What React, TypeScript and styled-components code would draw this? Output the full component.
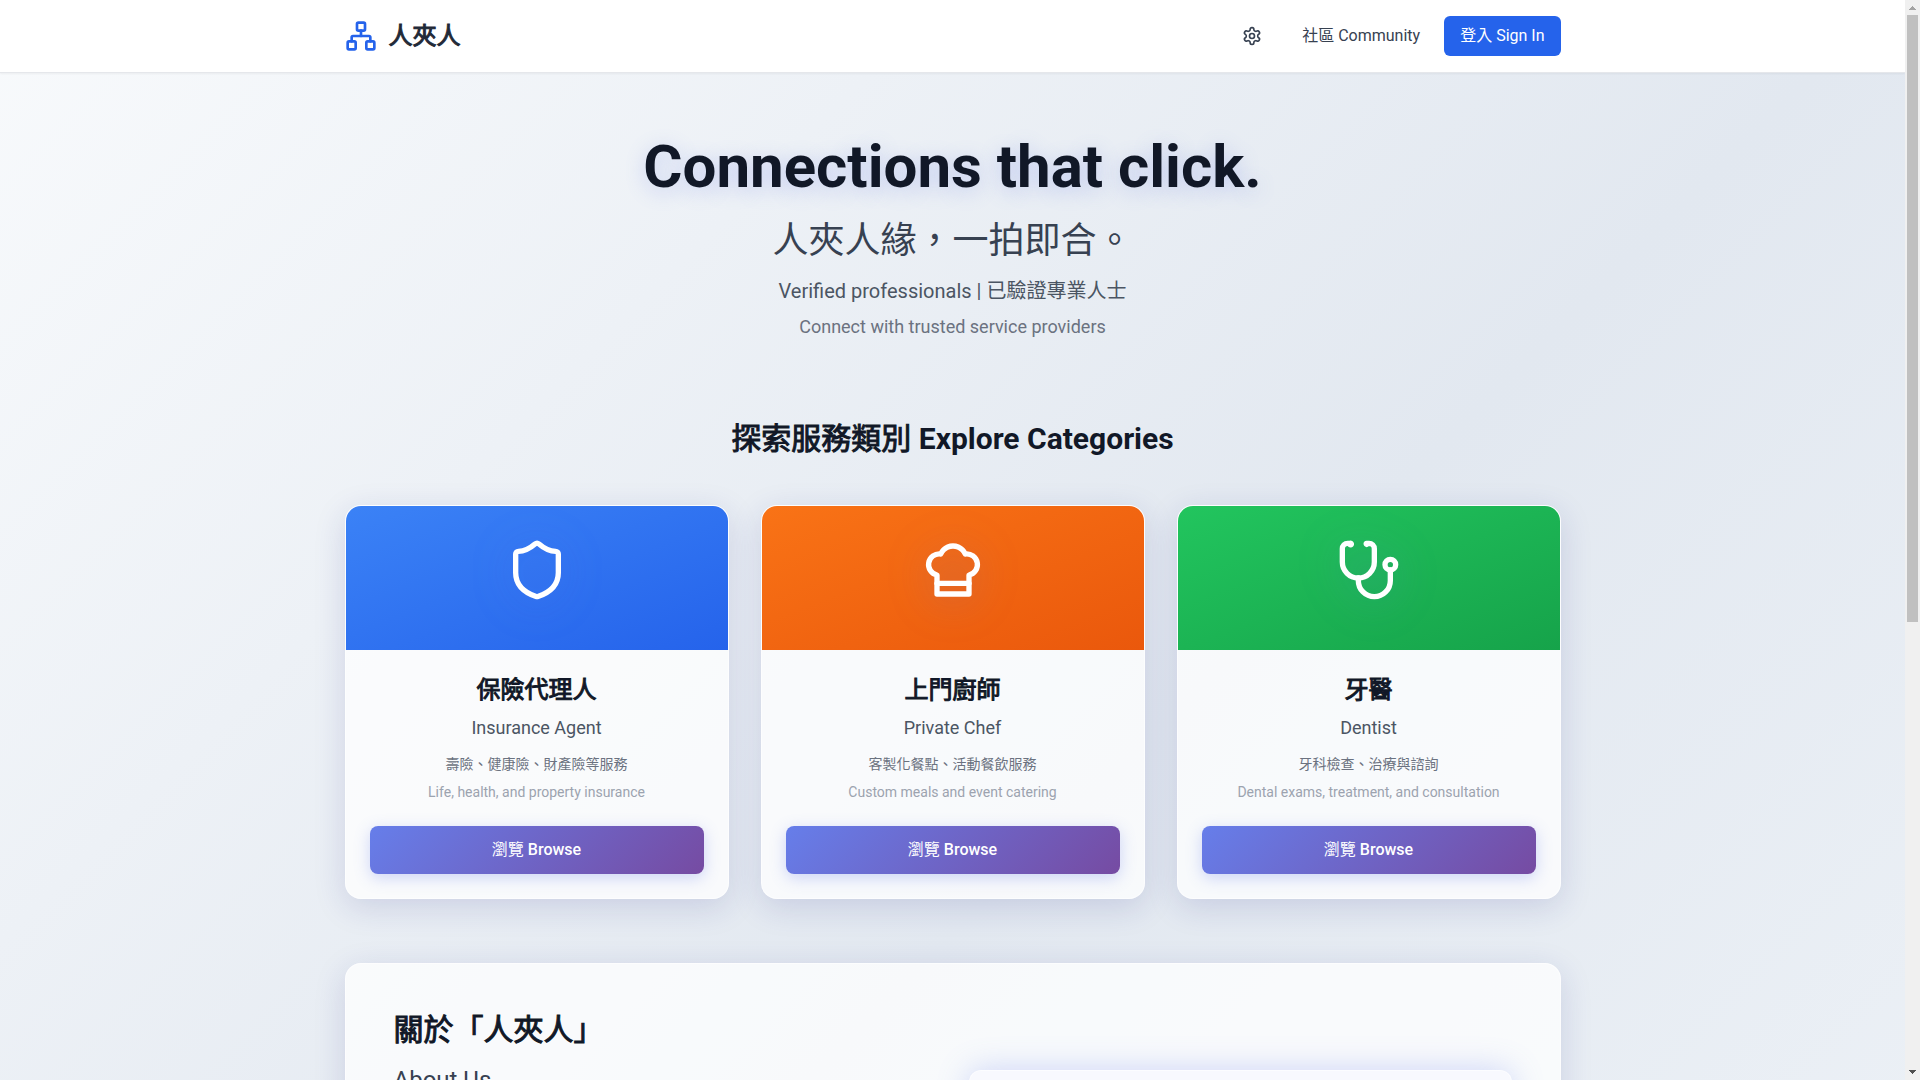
import React from "react";
import styled, { createGlobalStyle } from "styled-components";
import { Network, Shield } from "lucide-react";

const GlobalStyle = createGlobalStyle`
  *, *::before, *::after { box-sizing: border-box; }
  body {
    margin: 0;
    font-family: Roboto, "Noto Sans CJK TC", sans-serif;
    font-size: 16px;
    line-height: 24px;
    color: #111827;
  }
  h1, h2, h3, p { margin: 0; }
  button { font: inherit; border: 0; cursor: pointer; }
`;

const Shell = styled.div`
  display: grid;
  grid-template-columns: minmax(0, 1fr) 15px;
  height: 100vh;
`;

const Scroller = styled.div`
  min-height: 0;
  overflow-y: auto;
  scrollbar-width: none;
`;

const ScrollRail = styled.div`
  display: flex;
  flex-direction: column;
  background: #f0f0f0;
`;

const RailArrow = styled.svg`
  flex: none;
  width: 15px;
  height: 15px;
  shape-rendering: crispEdges;
`;

const RailTrack = styled.div`
  flex: 1;
  padding: 0 2px;
`;

const RailThumb = styled.div`
  background: #c0c0c0;
`;

const Page = styled.div`
  display: flex;
  flex-direction: column;
  min-height: 100%;
  background: linear-gradient(135deg, #f8fafc 0%, #e2e8f0 50%, #f1f5f9 100%);
`;

const Header = styled.header`
  background: #fff;
  border-bottom: 1px solid #e5e7eb;
  box-shadow: 0 1px 2px rgba(0, 0, 0, 0.05);
`;

const Container = styled.div`
  width: 100%;
  max-width: 1280px;
  margin: 0 auto;
  padding: 0 32px;
`;

const Bar = styled(Container)`
  display: flex;
  align-items: center;
  justify-content: space-between;
  padding-top: 16px;
  padding-bottom: 16px;
`;

/* Chinese run inside heavier text: regular weight, thickened by an outline where it is bold. */
const Zh = styled.span<{ $bold?: boolean }>`
  font-weight: 400;
  -webkit-text-stroke: ${(p) => (p.$bold ? "1px currentColor" : "0")};
`;

const Brand = styled.a`
  display: flex;
  align-items: center;
  gap: 12px;
  font-size: 24px;
  line-height: 32px;
  font-weight: 700;
  color: #1f2937;
  text-decoration: none;
  svg { color: #2563eb; }
`;

const Nav = styled.nav`
  display: flex;
  align-items: center;
  gap: 24px;
`;

const IconButton = styled.button`
  display: flex;
  padding: 8px 16px;
  background: transparent;
  color: #374151;
`;

const NavLink = styled.a`
  color: #374151;
  text-decoration: none;
`;

const SignIn = styled.button`
  padding: 8px 16px;
  border-radius: 6px;
  background: #2563eb;
  color: #fff;
`;

const Main = styled.main`
  padding-bottom: 320px;
`;

const Hero = styled.section`
  padding: 64px 0;
  text-align: center;
`;

const HeroTitle = styled.h1`
  margin-bottom: 24px;
  font-size: 60px;
  line-height: 60px;
  font-weight: 700;
  text-shadow: 0 4px 20px rgba(102, 126, 234, 0.3);
`;

const HeroSlogan = styled.p`
  margin-bottom: 16px;
  font-size: 36px;
  line-height: 40px;
  color: #374151;
`;

const HeroLead = styled.p`
  margin-bottom: 8px;
  font-size: 20px;
  line-height: 28px;
  color: #4b5563;
`;

const HeroNote = styled.p`
  font-size: 18px;
  line-height: 28px;
  color: #6b7280;
`;

const SectionTitle = styled.h2`
  font-size: 30px;
  line-height: 36px;
  font-weight: 700;
`;

const Categories = styled.section`
  display: flex;
  flex-direction: column;
  gap: 48px;
  padding-top: 16px;
  margin-bottom: 64px;
  text-align: center;
`;

const CardGrid = styled.div`
  display: grid;
  grid-template-columns: repeat(3, 1fr);
  gap: 32px;
`;

const glass = `
  border: 1px solid rgba(255, 255, 255, 0.6);
  border-radius: 16px;
  background: rgba(255, 255, 255, 0.75);
  box-shadow: 0 8px 32px rgba(31, 38, 135, 0.15);
`;

const Card = styled.article`
  ${glass}
  overflow: hidden;
`;

const CardBanner = styled.div<{ $from: string; $to: string }>`
  display: flex;
  justify-content: center;
  padding: 32px 32px 48px;
  background: linear-gradient(to bottom right, ${(p) => p.$from}, ${(p) => p.$to});
  color: #fff;
  svg { filter: drop-shadow(0 4px 20px rgba(102, 126, 234, 0.3)); }
`;

const CardBody = styled.div`
  padding: 24px;
`;

const CardTitle = styled.h3`
  margin-bottom: 8px;
  font-size: 24px;
  line-height: 32px;
  font-weight: 700;
`;

const CardSubtitle = styled.p`
  margin-bottom: 12px;
  font-size: 18px;
  line-height: 28px;
  color: #4b5563;
`;

const CardText = styled.p<{ $muted?: boolean }>`
  margin-bottom: ${(p) => (p.$muted ? 24 : 8)}px;
  font-size: 14px;
  line-height: 20px;
  color: ${(p) => (p.$muted ? "#9ca3af" : "#6b7280")};
`;

const BrowseButton = styled.button`
  display: block;
  width: 100%;
  padding: 12px 24px;
  border-radius: 8px;
  background: linear-gradient(135deg, #667eea 0%, #764ba2 100%);
  box-shadow: 0 4px 16px rgba(102, 126, 234, 0.3);
  color: #fff;
  font-weight: 500;
`;

const About = styled.section`
  ${glass}
  display: grid;
  grid-template-columns: 1fr 1fr;
  align-items: center;
  gap: 32px;
  padding: 48px;
`;

const AboutText = styled.div`
  display: flex;
  flex-direction: column;
  gap: 16px;
  min-height: 488px;
`;

const AboutSubtitle = styled.p`
  font-size: 24px;
  line-height: 32px;
  color: #374151;
`;

const AboutPanel = styled.aside`
  min-height: 372px;
  border: 1px solid rgba(255, 255, 255, 0.6);
  border-radius: 12px;
  background: #f8f9fe;
  box-shadow: 0 0 32px rgba(102, 126, 234, 0.3);
`;

const Stroke = styled.svg.attrs({ viewBox: "0 0 24 24", "aria-hidden": true })<{ $size: number }>`
  width: ${(p) => p.$size}px;
  height: ${(p) => p.$size}px;
  fill: none;
  stroke: currentColor;
  stroke-width: 2;
  stroke-linecap: round;
  stroke-linejoin: round;
`;

const GearIcon = () => (
  <Stroke $size={20}>
    <path d="M12.22 2h-.44a2 2 0 0 0-2 2v.18a2 2 0 0 1-1 1.73l-.43.25a2 2 0 0 1-2 0l-.15-.08a2 2 0 0 0-2.73.73l-.22.38a2 2 0 0 0 .73 2.73l.15.1a2 2 0 0 1 1 1.72v.51a2 2 0 0 1-1 1.74l-.15.09a2 2 0 0 0-.73 2.73l.22.38a2 2 0 0 0 2.73.73l.15-.08a2 2 0 0 1 2 0l.43.25a2 2 0 0 1 1 1.73V20a2 2 0 0 0 2 2h.44a2 2 0 0 0 2-2v-.18a2 2 0 0 1 1-1.73l.43-.25a2 2 0 0 1 2 0l.15.08a2 2 0 0 0 2.73-.73l.22-.39a2 2 0 0 0-.73-2.73l-.15-.08a2 2 0 0 1-1-1.74v-.5a2 2 0 0 1 1-1.74l.15-.09a2 2 0 0 0 .73-2.73l-.22-.38a2 2 0 0 0-2.73-.73l-.15.08a2 2 0 0 1-2 0l-.43-.25a2 2 0 0 1-1-1.73V4a2 2 0 0 0-2-2z" />
    <circle cx="12" cy="12" r="3" />
  </Stroke>
);

const ShieldIcon = () => <Shield size={64} aria-hidden />;

const ChefHatIcon = () => (
  <Stroke $size={64}>
    <path d="M6 13.87A4 4 0 0 1 7.41 6a5.11 5.11 0 0 1 1.05-1.54 5 5 0 0 1 7.08 0A5.11 5.11 0 0 1 16.59 6 4 4 0 0 1 18 13.87V21H6Z" />
    <path d="M6 17h12" />
  </Stroke>
);

const StethoscopeIcon = () => (
  <Stroke $size={64}>
    <path d="M4.8 2.3A.3.3 0 1 0 5 2H4a2 2 0 0 0-2 2v5a6 6 0 0 0 6 6 6 6 0 0 0 6-6V4a2 2 0 0 0-2-2h-1a.2.2 0 1 0 .3.3" />
    <path d="M8 15v1a6 6 0 0 0 6 6 6 6 0 0 0 6-6v-4" />
    <circle cx="20" cy="10" r="2" />
  </Stroke>
);

type Category = {
  icon: React.ComponentType;
  from: string;
  to: string;
  title: string;
  subtitle: string;
  text: string;
  note: string;
};

const categories: Category[] = [
  {
    icon: ShieldIcon,
    from: "#3b82f6",
    to: "#2563eb",
    title: "保險代理人",
    subtitle: "Insurance Agent",
    text: "壽險、健康險、財產險等服務",
    note: "Life, health, and property insurance",
  },
  {
    icon: ChefHatIcon,
    from: "#f97316",
    to: "#ea580c",
    title: "上門廚師",
    subtitle: "Private Chef",
    text: "客製化餐點、活動餐飲服務",
    note: "Custom meals and event catering",
  },
  {
    icon: StethoscopeIcon,
    from: "#22c55e",
    to: "#16a34a",
    title: "牙醫",
    subtitle: "Dentist",
    text: "牙科檢查、治療與諮詢",
    note: "Dental exams, treatment, and consultation",
  },
];

function CategoryCard({ icon: Icon, from, to, title, subtitle, text, note }: Category) {
  return (
    <Card>
      <CardBanner $from={from} $to={to}>
        <Icon />
      </CardBanner>
      <CardBody>
        <CardTitle>
          <Zh $bold>{title}</Zh>
        </CardTitle>
        <CardSubtitle>{subtitle}</CardSubtitle>
        <CardText>{text}</CardText>
        <CardText $muted>{note}</CardText>
        <BrowseButton type="button">
          <Zh>瀏覽</Zh> Browse
        </BrowseButton>
      </CardBody>
    </Card>
  );
}

function Rail({ target }: { target: React.RefObject<HTMLDivElement | null> }) {
  const [thumb, setThumb] = React.useState({ size: 100, start: 0 });

  React.useLayoutEffect(() => {
    const el = target.current;
    if (!el) return;
    const update = () =>
      setThumb({
        size: (el.clientHeight / el.scrollHeight) * 100,
        start: (el.scrollTop / el.scrollHeight) * 100,
      });
    update();
    el.addEventListener("scroll", update);
    window.addEventListener("resize", update);
    return () => {
      el.removeEventListener("scroll", update);
      window.removeEventListener("resize", update);
    };
  }, [target]);

  return (
    <ScrollRail aria-hidden>
      <RailArrow viewBox="0 0 15 15">
        <path d="M4 10h7V9h-1V8H9V7H8V6H7v1H6v1H5v1H4z" fill="#a3a3a3" />
      </RailArrow>
      <RailTrack>
        <div style={{ height: `${thumb.start}%` }} />
        <RailThumb style={{ height: `${thumb.size}%` }} />
      </RailTrack>
      <RailArrow viewBox="0 0 15 15">
        <path d="M4 5h7v1h-1v1H9v1H8v1H7V8H6V7H5V6H4z" fill="#505050" />
      </RailArrow>
    </ScrollRail>
  );
}

export default function App() {
  const scroller = React.useRef<HTMLDivElement>(null);

  return (
    <Shell>
      <GlobalStyle />
      <Scroller ref={scroller}>
        <Page lang="zh-Hant">
          <Header>
            <Bar>
              <Brand href="#">
                <Network size={32} aria-hidden />
                <Zh $bold>人夾人</Zh>
              </Brand>
              <Nav>
                <IconButton type="button" aria-label="Settings">
                  <GearIcon />
                </IconButton>
                <NavLink href="#community">社區 Community</NavLink>
                <SignIn type="button">登入 Sign In</SignIn>
              </Nav>
            </Bar>
          </Header>
          <Main>
            <Container>
              <Hero>
                <HeroTitle>Connections that click.</HeroTitle>
                <HeroSlogan>人夾人緣，一拍即合。</HeroSlogan>
                <HeroLead>Verified professionals | 已驗證專業人士</HeroLead>
                <HeroNote>Connect with trusted service providers</HeroNote>
              </Hero>
              <Categories>
                <SectionTitle>
                  <Zh $bold>探索服務類別</Zh> Explore Categories
                </SectionTitle>
                <CardGrid>
                  {categories.map((c) => (
                    <CategoryCard key={c.subtitle} {...c} />
                  ))}
                </CardGrid>
              </Categories>
              <About>
                <AboutText>
                  <SectionTitle>
                    <Zh $bold>關於「人夾人」</Zh>
                  </SectionTitle>
                  <AboutSubtitle>About Us</AboutSubtitle>
                </AboutText>
                <AboutPanel />
              </About>
            </Container>
          </Main>
        </Page>
      </Scroller>
      <Rail target={scroller} />
    </Shell>
  );
}
